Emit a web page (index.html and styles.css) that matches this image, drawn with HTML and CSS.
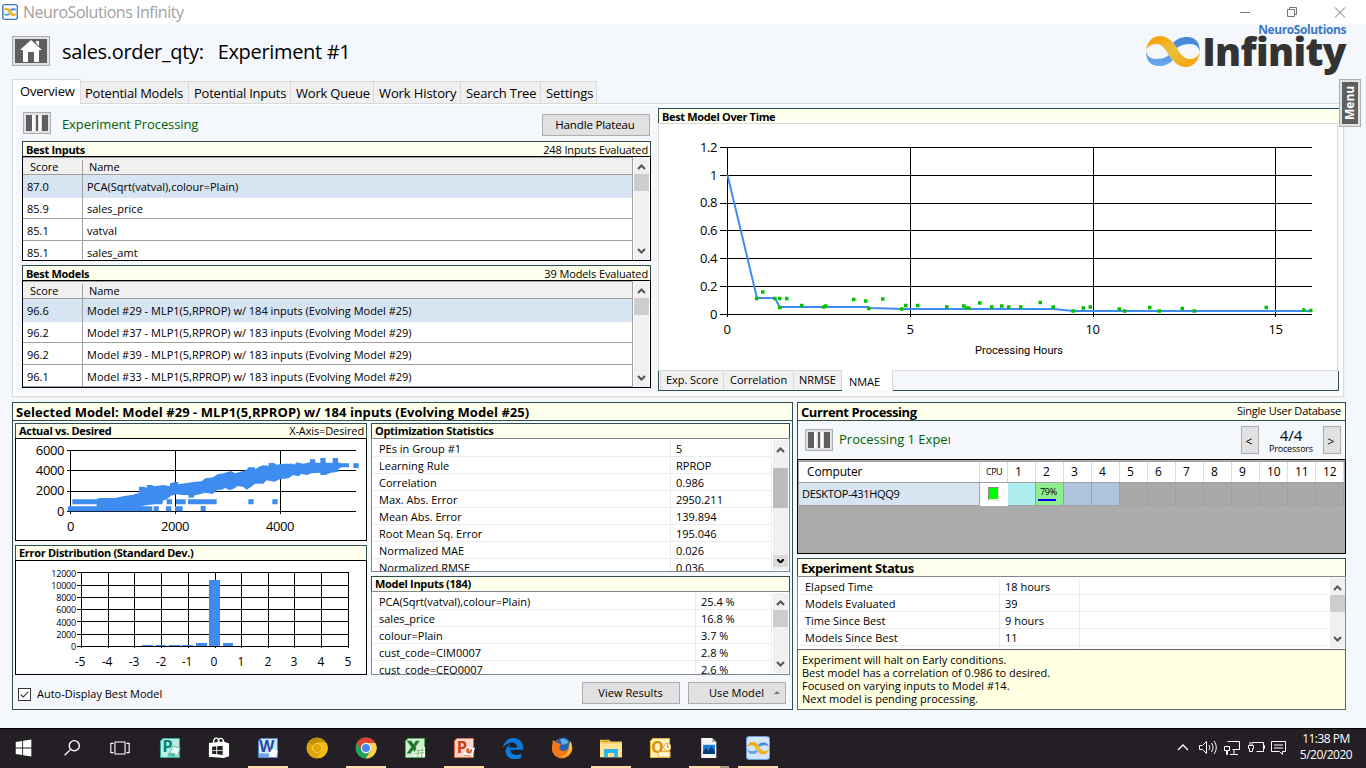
FILE: index.html
```
<!DOCTYPE html>
<html lang="en">
<head>
<meta charset="utf-8">
<title>NeuroSolutions Infinity</title>
<link rel="stylesheet" href="styles.css">
</head>
<body>
<svg class="defs" width="0" height="0">
  <defs>
    <linearGradient id="gold" x1="0" y1="0" x2="1" y2="1"><stop offset="0" stop-color="#ff9c00"/><stop offset=".5" stop-color="#e8c040"/><stop offset="1" stop-color="#ff9c00"/></linearGradient>
    <linearGradient id="sky" x1="0" y1="0" x2="0" y2="1"><stop offset="0" stop-color="#4285d6"/><stop offset="1" stop-color="#6ba6ee"/></linearGradient>
    <symbol id="up" viewBox="0 0 9 6"><path d="M1 5 4.500 1.500 8 5" fill="none" stroke="currentColor" stroke-width="2"/></symbol>
    <symbol id="down" viewBox="0 0 9 6"><path d="M1 1 4.500 4.500 8 1" fill="none" stroke="currentColor" stroke-width="2"/></symbol>
    <symbol id="infinity" viewBox="0 0 54 31">
      <path d="M0 15C1 20 4 23 10 23 15 23 19 22 23 19L27 24C23 28 19 30 13 30 5 30 0 25 0 15zM54 16C53 11 50 8 44 8 39 8 35 9 31 12L27 7C31 3 35 1 41 1 49 1 54 6 54 16z" fill="url(#sky)"/>
      <path d="M0 15C1 4 8 0 14 0 22 0 26 5 31 12 34 18 38 23 44 23 49 23 53 20 54 15 53 26 46 31 40 31 32 31 28 26 23 19 19 13 16 8 11 8 6 8 1 10 0 15z" fill="url(#gold)"/>
    </symbol>
    <symbol id="pause" viewBox="0 0 22 16"><path d="M0 0h6v16H0zM10 0h2v16h-2zM16 0h6v16h-6z" fill="#5f5f5f"/><path d="M6 0h2.500v16H6zM13 0h2v16h-2z" fill="#fff"/></symbol>
  </defs>
</svg>

<header class="titlebar">
  <svg class="app-icon" viewBox="0 0 16 16"><rect x=".7" y=".7" width="14.600" height="14.600" rx="2" fill="#f4f7fc" stroke="#3b78c4" stroke-width="1.300"/><use href="#infinity" x="1" y="4" width="14" height="8"/></svg>
  <span class="app-name">NeuroSolutions Infinity</span>
  <svg class="window-buttons" viewBox="0 0 110 20" fill="none" stroke="#777"><path d="M0 10.500h10"/><path d="M47.500 7.500h7v7h-7zM49.500 7.500v-2h7v7h-2"/><path d="M95 5.500l10 10M105 5.500l-10 10"/></svg>
</header>

<main class="app">
  <section class="heading">
    <div class="home"><svg viewBox="0 0 32 24"><rect width="32" height="24" fill="#5f5f5f"/><path d="M16 1 27 11h-3v12h-5v-10h-6v10H8V11H5zM21 2h3v5l-3-3z" fill="#fff"/></svg></div>
    <h1><span>sales.order_qty:</span><span>Experiment #1</span></h1>
    <div class="brand">
      <svg class="brand-mark" viewBox="0 0 54 31"><use href="#infinity"/></svg>
      <div class="brand-text"><span class="brand-small">NeuroSolutions</span><span class="brand-big">Infinity</span></div>
    </div>
  </section>

  <nav class="tabs">
    <span class="tab on">Overview</span><span class="tab t2">Potential Models</span><span class="tab t3">Potential Inputs</span><span class="tab t4">Work Queue</span><span class="tab t5">Work History</span><span class="tab t6">Search Tree</span><span class="tab t7">Settings</span>
  </nav>

  <section class="overview">
    <div class="left">
      <div class="status">
        <div class="pause"><svg viewBox="0 0 22 16"><use href="#pause"/></svg></div>
        <span class="green">Experiment Processing</span>
        <button class="btn plateau">Handle Plateau</button>
      </div>
      <div class="caption"><b>Best Inputs</b><span>248 Inputs Evaluated</span></div>
      <div class="grid inputs">
        <div class="rows">
          <div class="row head"><span>Score</span><span>Name</span></div>
          <div class="row sel"><span>87.0</span><span>PCA(Sqrt(vatval),colour=Plain)</span></div>
          <div class="row"><span>85.9</span><span>sales_price</span></div>
          <div class="row"><span>85.1</span><span>vatval</span></div>
          <div class="row"><span>85.1</span><span>sales_amt</span></div>
        </div>
        <div class="scroll"><svg><use href="#up"/></svg><i></i><svg><use href="#down"/></svg></div>
      </div>
      <div class="caption second"><b>Best Models</b><span>39 Models Evaluated</span></div>
      <div class="grid models">
        <div class="rows">
          <div class="row head"><span>Score</span><span>Name</span></div>
          <div class="row sel"><span>96.6</span><span>Model #29 - MLP1(5,RPROP) w/ 184 inputs (Evolving Model #25)</span></div>
          <div class="row"><span>96.2</span><span>Model #37 - MLP1(5,RPROP) w/ 183 inputs (Evolving Model #29)</span></div>
          <div class="row"><span>96.2</span><span>Model #39 - MLP1(5,RPROP) w/ 183 inputs (Evolving Model #29)</span></div>
          <div class="row"><span>96.1</span><span>Model #33 - MLP1(5,RPROP) w/ 183 inputs (Evolving Model #29)</span></div>
        </div>
        <div class="scroll"><svg><use href="#up"/></svg><i></i><svg><use href="#down"/></svg></div>
      </div>
    </div>

    <div class="right">
      <div class="chart-caption"><b>Best Model Over Time</b></div>
      <svg class="time-chart" viewBox="659 124 678 246">
        <path class="axis" d="M720 147.500h592M720 175.500h592M720 203.500h592M720 230.500h592M720 258.500h592M720 286.500h592M720 314.500h592M727.500 147v170M910.500 147v170M1093.500 147v170M1275.500 147v170"/>
        <path class="line" d="M727.500 175 757 298h18l4.500 9H867l3 1 34 1h150l19 2h239"/>
        <path class="dots" d="M755 298.500h3.500M761 292h3.500M773 298.500h3.500M778 298.500h3.500M785 298.500h3.500M778 307.500h3.500M800 305.500h3.500M822 307h3.500M824 306h3.500M852 299.500h3.500M864 301h3.500M867 308.500h3.500M881 299h3.500M900 309h3.500M904 305.500h3.500M916 305.500h3.500M945 307h3.500M962 306h3.500M965 308h3.500M967 308h3.500M978 303h3.500M990 307h3.500M1000 306h3.500M1007 307h3.500M1019 307h3.500M1038.500 302.500h3.500M1051.500 307h3.500M1071.500 311h3.500M1081.500 308h3.500M1088.500 307h3.500M1117.500 309h3.500M1123 311h3.500M1148 307.500h3.500M1157.500 311h3.500M1180.500 308.500h3.500M1192.500 311h3.500M1264.500 307.500h3.500M1302 310h3.500M1309 310.500h3.500"/>
        <g class="label end"><text x="717" y="152">1.2</text><text x="717" y="180">1</text><text x="717" y="207">0.8</text><text x="717" y="235">0.6</text><text x="717" y="263">0.4</text><text x="717" y="291">0.2</text><text x="717" y="319">0</text></g>
        <g class="label mid"><text x="727" y="334">0</text><text x="910" y="334">5</text><text x="1092.500" y="334">10</text><text x="1275.500" y="334">15</text></g>
        <text class="hours" x="1019" y="354" textLength="88">Processing Hours</text>
      </svg>
      <div class="metrics"><span class="m1">Exp. Score</span><span class="m2">Correlation</span><span class="m3">NRMSE</span><span class="m4">NMAE</span></div>
    </div>
  </section>

  <section class="lower">
    <div class="selected">
      <div class="panel-title wide">Selected Model: Model #29 - MLP1(5,RPROP) w/ 184 inputs (Evolving Model #25)</div>
      <div class="selected-body">
        <div class="plots">
          <div class="caption"><b>Actual vs. Desired</b><span>X-Axis=Desired</span></div>
          <svg class="scatter" viewBox="15 438 352 103">
            <path class="axis" d="M67 450.500h289M67 470.500h289M67 491.500h289M67 511.500h289M70.500 450v64M175.500 450v64M280.500 450v64"/>
            <g transform="translate(0 395) scale(.33333)" fill="#3f8cf0">
              <path d="M204 334h253v15H204zM461 334h15v15h-15zM217 313h270v15H217zM498 334h16v15h-16zM525 334h23v15h-23zM602 333h15v15h-15zM500 313h16v15h-16zM528 313h29v15h-29zM564 313h86v15h-86zM745 313h16v15h-16zM817 313h16v15h-16zM1060 205h16v14h-16z"/>
              <path d="M290 340V314L296 309H345L373 303 400 299 417 293V275H433L440 279V270H456L463 274 490 270 510 274V265L525 261H535V268L560 264 585 260 605 259 616 250 640 247 652 238 670 235 693 228 705 235 722 230 740 225 745 217H765V223L780 214 790 211 806 212V204H822L830 209 850 206 878 206 883 209 890 202 910 206 930 202V193H946V203H961V189H977V203H998V189H1014V202L1024 205H1047V217H1025L1015 222V230L990 234 977 240 961 240V233L935 235 920 240 905 237 895 244 880 240 865 250 840 253 822 260 800 256 790 266 765 266 756 274 740 284 730 276 713 273 705 279 690 286 675 279 665 284 650 286 638 297 615 293 600 298 584 301 580 308 566 308 565 300 545 300 530 298 513 302 502 312 488 317V324L470 326 430 332 400 340z"/>
            </g>
            <g class="label end"><text x="64" y="455">6000</text><text x="64" y="475">4000</text><text x="64" y="495">2000</text><text x="64" y="516">0</text></g>
            <g class="label mid"><text x="70.500" y="531">0</text><text x="175" y="531">2000</text><text x="280" y="531">4000</text></g>
          </svg>
          <div class="caption second"><b>Error Distribution (Standard Dev.)</b></div>
          <svg class="errors" viewBox="15 560 352 115">
            <path class="axis" d="M77 572.500h272M77 585.500h272M77 597.500h272M77 609.500h272M77 621.500h272M77 634.500h272M77 646.500h272M81.500 572v76M108.500 572v76M134.500 572v76M161.500 572v76M188.500 572v76M215.500 572v76M241.500 572v76M268.500 572v76M294.500 572v76M321.500 572v76M348.500 572v76"/>
            <path fill="#3f8cf0" d="M142 645h11v1h-11zM156 645h10v1h-10zM169 645h11v1h-11zM182 645h11v1h-11zM196 643h11v3h-11zM209 580h11v66h-11zM223 643h10v3h-10z"/>
            <g class="tiny end"><text x="76" y="577">12000</text><text x="76" y="589">10000</text><text x="76" y="601">8000</text><text x="76" y="613">6000</text><text x="76" y="626">4000</text><text x="76" y="638">2000</text><text x="76" y="650">0</text></g>
            <g class="hist mid"><text x="80" y="666">-5</text><text x="107" y="666">-4</text><text x="134" y="666">-3</text><text x="161" y="666">-2</text><text x="187" y="666">-1</text><text x="214" y="666">0</text><text x="241" y="666">1</text><text x="268" y="666">2</text><text x="294" y="666">3</text><text x="321" y="666">4</text><text x="348" y="666">5</text></g>
          </svg>
        </div>
        <div class="stats">
          <div class="caption"><b>Optimization Statistics</b></div>
          <div class="list opt">
            <dl><dt>PEs in Group #1</dt><dd>5</dd><dt>Learning Rule</dt><dd>RPROP</dd><dt>Correlation</dt><dd>0.986</dd><dt>Max. Abs. Error</dt><dd>2950.211</dd><dt>Mean Abs. Error</dt><dd>139.894</dd><dt>Root Mean Sq. Error</dt><dd>195.046</dd><dt>Normalized MAE</dt><dd>0.026</dd><dt>Normalized RMSE</dt><dd>0.036</dd></dl>
            <div class="scroll lowered"><svg><use href="#up"/></svg><i></i><svg class="pressed"><use href="#down"/></svg></div>
          </div>
          <div class="caption second"><b>Model Inputs (184)</b></div>
          <div class="list mi">
            <dl><dt>PCA(Sqrt(vatval),colour=Plain)</dt><dd>25.4 %</dd><dt>sales_price</dt><dd>16.8 %</dd><dt>colour=Plain</dt><dd>3.7 %</dd><dt>cust_code=CIM0007</dt><dd>2.8 %</dd><dt>cust_code=CEO0007</dt><dd>2.6 %</dd></dl>
            <div class="scroll"><svg><use href="#up"/></svg><i></i><svg><use href="#down"/></svg></div>
          </div>
        </div>
      </div>
      <div class="actions">
        <span class="check"><svg viewBox="0 0 13 13"><path d="M2 6.500 5 9.500 11 3" fill="none" stroke="#333" stroke-width="1.300"/></svg></span>
        <span class="auto">Auto-Display Best Model</span>
        <button class="btn view">View Results</button>
        <button class="btn use">Use Model<i></i></button>
      </div>
    </div>

    <div class="side">
      <div class="processing">
        <div class="panel-title"><span>Current Processing</span><small>Single User Database</small></div>
        <div class="proc-bar">
          <div class="pause"><svg viewBox="0 0 22 16"><use href="#pause"/></svg></div>
          <span class="green clip">Processing 1 Experiment</span>
          <button class="btn step">&lt;</button>
          <div class="count"><span>4/4</span><small>Processors</small></div>
          <button class="btn step">&gt;</button>
        </div>
        <div class="computers">
          <div class="comp head"><span>Computer</span><span class="cpu">CPU</span><span>1</span><span>2</span><span>3</span><span>4</span><span>5</span><span>6</span><span>7</span><span>8</span><span>9</span><span>10</span><span>11</span><span>12</span></div>
          <div class="comp data"><span>DESKTOP-431HQQ9</span><span class="lamp"><i></i></span><span class="aqua"></span><span class="busy">79%<i></i></span><span class="idle"></span><span class="idle"></span><span></span><span></span><span></span><span></span><span></span><span></span><span></span><span></span></div>
        </div>
      </div>
      <div class="exp">
        <div class="panel-title"><span>Experiment Status</span></div>
        <div class="list es">
          <dl><dt>Elapsed Time</dt><dd>18 hours</dd><dd></dd><dt>Models Evaluated</dt><dd>39</dd><dd></dd><dt>Time Since Best</dt><dd>9 hours</dd><dd></dd><dt>Models Since Best</dt><dd>11</dd><dd></dd><dt></dt><dd></dd><dd></dd></dl>
          <div class="scroll"><svg><use href="#up"/></svg><i></i><svg><use href="#down"/></svg></div>
        </div>
        <div class="message"><p>Experiment will halt on Early conditions.</p><p>Best model has a correlation of 0.986 to desired.</p><p>Focused on varying inputs to Model #14.</p><p>Next model is pending processing.</p></div>
      </div>
    </div>
  </section>
  <div class="menu"><span>Menu</span></div>
</main>

<footer class="taskbar">
  <span class="slot"><svg viewBox="0 0 24 24"><path d="M3 5.500 10 4.400v7.100H3zM11 4.200l9-1.400v8.700h-9zM3 12.500h7v7.100l-7-1.100zM11 12.500h9v8.700l-9-1.400z" fill="#fff"/></svg></span>
  <span class="slot"><svg viewBox="0 0 24 24" fill="none" stroke="#fff" stroke-width="1.500"><circle cx="14.500" cy="9.500" r="5.500"/><path d="M10.500 13.500 4 20"/></svg></span>
  <span class="slot"><svg viewBox="0 0 24 24" fill="none" stroke="#fff" stroke-width="1.200"><path d="M6.500 5.500h11v13h-11zM5 7H2v10h3M19 7h3v10h-3"/></svg></span>
  <span class="slot first"><svg viewBox="0 0 24 24"><path d="M4 1h19v22H1V4z" fill="#0c9b86"/><path d="M4.500 2H22v20H2V4.500z" fill="#bfeae3"/><text x="3.500" y="16.500" font-size="18" fill="#0b8573">P</text><path d="M15 10l8 2-3 9-9-2z" fill="#eafaf7" stroke="#53b9ab"/><path d="M11 17l7 1-1 4-8-1z" fill="#53c0b0"/></svg></span>
  <span class="slot"><svg viewBox="0 0 24 24"><path d="M1 6.500 17 5v18L1 21.500zM17 5l6 2v14l-6 2z" fill="#fff"/><path d="M6 7c0-8 6-7 6-1M11 6c0-7 6-5 6 0" fill="none" stroke="#fff" stroke-width="1.500"/><path d="M4.500 10.500l4.500-.4v4h-4.500zM10 10l6-.5v4.600h-6zM4.500 15H9v3.800l-4.500-.4zM10 15h6v4.500l-6-.6z" fill="#241f24"/></svg></span>
  <span class="slot open"><svg viewBox="0 0 24 24"><path d="M4 1h19v22H1V4z" fill="#2d6bbf"/><path d="M4.500 2H22v20H2V4.500z" fill="#d5e6f8"/><text x="2.500" y="16.500" font-size="17" fill="#1c4fa8">W</text><path d="M16 13l7 2-3 7-8-1z" fill="#fff"/><path d="M2 18h11v4H2z" fill="#6fa2e0"/></svg></span>
  <span class="slot"><svg viewBox="0 0 24 24"><circle cx="12" cy="12" r="11.500" fill="#dda60b"/><path d="M12 12 3 6a11 11 0 0 1 18.500 0z" fill="#c28e00"/><path d="M12 6h10a11 11 0 0 1-10 17l5-8z" fill="#f2bd16"/><circle cx="12" cy="12" r="5" fill="#dda60b" stroke="#f4d160"/></svg></span>
  <span class="slot open"><svg viewBox="0 0 24 24"><circle cx="12" cy="12" r="11.500" fill="#25a05a"/><path d="M12 6.500h10.200a11.500 11.500 0 0 1-10.500 17l5.500-9z" fill="#fdd14b"/><path d="M2.100 6.200 7.300 14.700 12 6.500h10.200a11.500 11.500 0 0 0-20.100-.3z" fill="#e24334"/><circle cx="12" cy="12" r="5" fill="#4687f4" stroke="#fff" stroke-width="1.200"/></svg></span>
  <span class="slot"><svg viewBox="0 0 24 24"><path d="M4 1h19v22H1V4z" fill="#3e9b42"/><path d="M4.500 2H22v20H2V4.500z" fill="#d3edd0"/><path d="M3 4h5l2.500 4L13 4h4l-4.500 7 5 7h-5l-2.500-4-3 4H3l5-7z" fill="#22772b"/><path d="M13 13l10-2v11l-13-1z" fill="#f2faf0"/><path d="M13 15l9-1M12 18l10-1M16 13l-1 9M20 12l-1 10" stroke="#77b675" fill="none"/></svg></span>
  <span class="slot open"><svg viewBox="0 0 24 24"><path d="M4 1h19v22H1V4z" fill="#d05127"/><path d="M4.500 2H22v20H2V4.500z" fill="#fbd6c9"/><text x="4" y="17" font-size="18" fill="#c64316">P</text><path d="M15 10l9 2-3 10-10-2z" fill="#fff"/><circle cx="17.500" cy="15" r="3.300" fill="#e5683d"/><path d="M17.500 15v-4l3 1z" fill="#fff"/><path d="M12 20l8 1" stroke="#e5683d"/></svg></span>
  <span class="slot"><svg viewBox="0 0 24 24"><path d="M1 12C2 5 7 1 12.500 1 19 1 23 6 23 12v2H9c0 6 8 7 12 4v5c-7 3-16 1-17-6-.5-5 2-8 5-9-1 1-1.500 2-1.500 3.500h9C16.500 4 6 4 1 12z" fill="#0a7bdc"/></svg></span>
  <span class="slot"><svg viewBox="0 0 24 24"><circle cx="12" cy="12.500" r="11" fill="#e26613"/><circle cx="13" cy="9" r="8.500" fill="#2463b3"/><path d="M10 3c3-3 9 0 9 4-3-1-4 3-7 1z" fill="#67afe2"/><path d="M2 3l3 3 6 1.500-2 3.500c0 5 8 6 10 1l1-5c-1-1 5 3 3 8-4 11-21 10-22-2z" fill="#f3781c"/><path d="M21.500 4c5 13-5 19-12 18 7-1 11-6 10-12z" fill="#fbc23c"/></svg></span>
  <span class="slot open"><svg viewBox="0 0 24 24"><path d="M0 3h10l1.500 2H24v17H0z" fill="#f0c65a"/><path d="M1.500 4h8v1.500h-8z" fill="#d99f1d"/><path d="M0 7h24v15H0z" fill="#ffe394"/><path d="M4.500 13h15v9h-4v-4.500h-7V22h-4z" fill="#22b2ee"/></svg></span>
  <span class="slot"><svg viewBox="0 0 24 24"><path d="M4 1h19v22H1V4z" fill="#e2a116"/><path d="M4.500 2H22v20H2V4.500z" fill="#fff0b8"/><text x="2.500" y="17" font-size="17" fill="#d68f08">O</text><circle cx="20" cy="11" r="4" fill="#fff" stroke="#eaa923"/><path d="M20 8v3h2" stroke="#a67500" fill="none"/><path d="M10 16h13v6H10z" fill="#fff8d8" stroke="#dfa327"/></svg></span>
  <span class="slot open multi"><svg viewBox="0 0 24 24"><path d="M3.500 1h12l4.500 4.500V23H3.500z" fill="#f4f4f4"/><path d="M15.500 1v4.500H20z" fill="#aaa"/><path d="M5.500 8.500h13v10h-13z" fill="#1681da"/><path d="M5.500 16l3-4 3 3 3-5 4 6v2.500h-13z" fill="#083c75"/></svg></span>
  <span class="slot open"><svg class="big" viewBox="0 0 24 24"><rect width="24" height="24" rx="3" fill="#6d9de0"/><rect x="1" y="1" width="22" height="22" rx="2.500" fill="#d5e5f8"/><use href="#infinity" x="1" y="6" width="22" height="12.500"/></svg></span>
  <div class="tray">
    <svg viewBox="0 0 110 20" fill="none" stroke="#fff"><path d="M2 13l5-5 5 5" stroke-width="1.300"/><path d="M23.500 8.500h3l4-4v12l-4-4h-3zM33 8c1 2 1 3 0 5M35.500 6c2 3 2 6 0 9M38 4c3 4 3 9 0 13"/><path d="M51.500 4.500h12v8h-7M58 13v4M54 17.500h8M48.500 9.500h5v4h-2v4h-1v-4h-2z"/><path d="M76.500 5.500h11v9h-7M87.500 8.500h1v3h-1M72.500 8.500h5v3h-1v3h-3v-3h-1zM74 5v3M76 5v3"/><path d="M95.500 4.500h14v10h-3v3l-3-3h-8zM98 8h9M98 11h9"/></svg>
    <div class="clock"><span>11:38 PM</span><span>5/20/2020</span></div>
  </div>
</footer>
</body>
</html>
```
FILE: styles.css
```
* { box-sizing: border-box; }
body { margin: 0; width: 1366px; height: 768px; overflow: hidden; display: flex; flex-direction: column; background: #f4f7fc; color: #000; font-family: "Open Sans", "Noto Sans", sans-serif; font-size: 11px; letter-spacing: 0; }
.defs { position: absolute; }
svg { display: block; }
button { font: inherit; color: inherit; letter-spacing: inherit; }
b { letter-spacing: -.3px; }

.titlebar { height: 24px; background: #fff; display: flex; align-items: center; flex: none; }
.app-icon { width: 16px; height: 16px; margin-left: 2px; }
.app-name { margin-left: 5px; font-size: 16px; letter-spacing: -.48px; color: #a0a0a0; flex: 1; line-height: 24px; }
.window-buttons { width: 110px; height: 20px; margin: 0 16px 0 0; }

.app { height: 704px; position: relative; padding-left: 12px; flex: none; }
.heading { height: 55px; display: flex; align-items: flex-start; }
.home { margin-top: 12px; width: 38px; height: 30px; padding: 2px; border: 1px solid #adadad; background: #e1e1e1; }
.home svg { width: 32px; height: 24px; }
h1 { margin: 13px 0 0 12px; font-size: 20px; font-weight: 400; line-height: 30px; flex: 1; letter-spacing: -.33px; display: flex; gap: 14px; }
.brand { display: flex; width: 200px; margin-right: 20px; }
.brand-mark { width: 54px; height: 31px; margin-top: 12px; flex: none; }
.brand-text { display: flex; flex-direction: column; align-items: flex-end; width: 146px; }
.brand-small { font-size: 12px; line-height: 12px; font-weight: 700; color: #3b78c4; letter-spacing: -.4px; }
.brand-big { font-size: 39px; line-height: 32px; font-weight: 800; color: #333; letter-spacing: -.65px; margin-top: -1px; }

.tabs { height: 24px; display: flex; align-items: flex-end; font-size: 13px; letter-spacing: -.22px; }
.tab { height: 22px; line-height: 23px; background: #f0f0f0; border: 1px solid #d9d9d9; border-left: 0; border-bottom: 0; padding-left: 5px; white-space: nowrap; }
.tab.on { width: 69px; height: 25px; background: #fff; border-left: 1px solid #d9d9d9; padding-left: 7px; line-height: 23px; margin-bottom: -1px; z-index: 1; }
.t2 { width: 108px; padding-left: 4px; } .t3 { width: 102px; } .t4 { width: 83px; } .t5 { width: 87px; letter-spacing: -.1px; } .t6 { width: 80px; letter-spacing: -.1px; } .t7 { width: 56px; letter-spacing: -.1px; }

.overview { width: 1332px; height: 294px; border: 1px solid #d9d9d9; box-shadow: 2px 1px 0 #f0f0f0; background: linear-gradient(#f4f7fc, #f4f7fc) no-repeat 3px 1px / 1323px 288px #fff; padding: 4px 4px 0 9px; display: flex; gap: 7px; }
.left { width: 629px; }
.status { height: 33px; display: flex; align-items: flex-start; }
.pause { width: 28px; height: 22px; border: 1px solid #adadad; background: #e1e1e1; padding: 2px; flex: none; margin: 4px 0 0 1px; }
.pause svg { width: 22px; height: 16px; }
.green { color: #006400; font-size: 13px; letter-spacing: -.1px; }
.status .green { margin-left: 11px; flex: 1; line-height: 33px; }
.btn { border: 1px solid #adadad; background: #e1e1e1; padding: 0; text-align: center; height: 22px; line-height: 20px; }
.plateau { width: 108px; margin: 6px 1px 0 0; font-size: 11.5px; letter-spacing: -.15px; padding-right: 2px; }
.caption { height: 15px; background: #ffffee; border: 1px solid #2f4f4f; border-bottom: 0; display: flex; justify-content: space-between; padding: 0 2px 0 3px; line-height: 15px; white-space: nowrap; letter-spacing: -.12px; }
.caption.second { margin-top: 4px; }
.selected .caption { line-height: 14px; }
.grid { border: 1px solid #000; display: flex; background: #fff; overflow: hidden; }
.inputs { height: 105px; } .models { height: 108px; }
.rows { width: 610px; border-right: 1px solid #a0a0a0; }
.row { height: 22px; display: grid; grid-template-columns: 60px 1fr; border-bottom: 1px solid #a0a0a0; line-height: 23px; }
.row span { padding-left: 4px; border-right: 1px solid #a0a0a0; }
.row span + span { border-right: 0; }
.row.sel span { background: #d7e4f2; }
.row.head { height: 18px; background: #f0f0f0; line-height: 20px; border-top: 1px solid #a0a0a0; }
.row.head span { padding-left: 7px; margin-top: 2px; line-height: 14px; letter-spacing: -.05px; }
.row.head span + span { padding-left: 6px; }
.scroll { width: 17px; background: #f0f0f0; border-left: 1px solid #fff; border-right: 1px solid #fff; display: flex; flex-direction: column; align-items: center; padding: 7px 0 6px; color: #555; flex: none; }
.scroll svg { width: 9px; height: 6px; flex: none; }
.scroll i { width: 15px; height: 17px; background: #cdcdcd; margin: 4px 0 auto; }

.right { width: 681px; display: flex; flex-direction: column; }
.chart-caption { height: 15px; background: #ffffee; border: 1px solid #2f4f4f; border-width: 1px 0 0 1px; padding-left: 3px; line-height: 15px; }
.chart-caption b { letter-spacing: -.35px; }
.time-chart { width: 680px; height: 248px; border: 1px solid #d9d9d9; background: #fff; }
.metrics { width: 681px; height: 20px; border: 1px solid #2f4f4f; border-top: 0; display: flex; line-height: 18px; padding-left: 1px; letter-spacing: -.05px; }
.metrics span { background: #f0f0f0; border-right: 1px solid #d9d9d9; padding-left: 6px; height: 19px; }
.metrics .m1 { width: 64px; border-left: 1px solid #d9d9d9; padding-left: 5px; } .metrics .m2 { width: 70px; } .metrics .m3 { width: 48px; padding-left: 5px; }
.metrics .m4 { width: 51px; height: 21px; margin-top: -1px; background: #fff; padding-left: 7px; line-height: 23px; }
.axis { stroke: #000; fill: none; }
.line { stroke: #3f8cf0; stroke-width: 2; fill: none; }
.dots { stroke: #00c000; stroke-width: 3.500; }
.label { font-size: 13px; letter-spacing: -.4px; }
.hist { font-size: 12px; letter-spacing: 0; }
.tiny { font-size: 9px; letter-spacing: -.2px; }
.end { text-anchor: end; }
.mid, .hours { text-anchor: middle; }
.hours { font: 11px Roboto, sans-serif; letter-spacing: 0; }

.lower { display: flex; gap: 4px; margin-top: 5px; }
.selected { width: 781px; height: 308px; border: 1px solid #2f4f4f; }
.panel-title { height: 18px; background: #ffffee; border-bottom: 1px solid #2f4f4f; font-weight: 700; font-size: 13px; line-height: 19px; padding: 0 4px 0 3px; display: flex; justify-content: space-between; letter-spacing: -.42px; white-space: nowrap; }
.panel-title.wide { letter-spacing: .06px; }
.panel-title small { font-size: 11px; font-weight: 400; letter-spacing: -.22px; line-height: 16px; }
.selected-body { display: flex; gap: 4px; padding: 2px 2px 0; }
.plots { width: 352px; } .stats { width: 419px; }
.scatter, .errors { width: 352px; background: #fff; outline: 1px solid #000; outline-offset: -1px; }
.scatter { height: 103px; } .errors { height: 115px; }
.list { border: 1px solid #828790; background: #fff; display: flex; padding: 1px; overflow: hidden; }
.opt { height: 134px; } .mi { height: 84px; }
.list dl { margin: 0; width: 399px; flex: none; display: grid; grid-template-columns: 298px 1fr; grid-auto-rows: 17px; line-height: 17px; }
.mi dl { grid-template-columns: 323px 1fr; }
.list dt, .list dd { margin: 0; border-right: 1px solid #ececec; border-bottom: 1px solid #ececec; padding-left: 6px; white-space: nowrap; }
.list dd { padding-left: 5px; }
.scroll.lowered i { margin-top: 15px; height: 40px; background: #bcbcbc; }
.pressed { color: #000; background: #dadada; outline: 4px solid #dadada; outline-offset: -1px; }
.actions { height: 34px; display: flex; padding: 7px 6px 0 5px; align-items: flex-start; }
.check { width: 13px; height: 13px; border: 1px solid #333; background: #fff; margin-top: 6px; }
.check svg { width: 11px; height: 11px; }
.auto { margin-left: 6px; flex: 1; line-height: 24px; }
.view, .use { width: 98px; letter-spacing: .05px; padding-right: 1px; }
.use { margin-left: 8px; position: relative; }
.use i { position: absolute; right: 5px; top: 8px; border: 3px solid transparent; border-top: 0; border-bottom-color: #777; }

.side { width: 549px; }
.processing { height: 152px; border: 1px solid #2f4f4f; border-bottom: 0; }
.proc-bar { height: 38px; display: flex; align-items: flex-start; padding: 5px 4px 0 6px; }
.proc-bar .pause { margin: 3px 0 0 1px; }
.clip { margin-left: 6px; width: 111px; overflow: hidden; white-space: nowrap; line-height: 27px; margin-right: 291px; letter-spacing: 0; }
.step { width: 18px; height: 28px; line-height: 29px; flex: none; font-size: 12px; padding-right: 2px; }
.count { width: 64px; display: flex; flex-direction: column; align-items: center; flex: none; font-size: 15px; line-height: 18px; letter-spacing: 0; }
.count small { font-size: 9px; line-height: 10px; letter-spacing: -.2px; }
.computers { height: 95px; margin: 0 -1px; border: 1px solid #000; background: #ababab; padding: 1px; }
.comp { display: grid; grid-template-columns: 181px repeat(13, 28px); width: 545px; height: 22px; }
.comp.head { background: #fff; font-size: 12px; line-height: 20px; border-bottom: 1px solid #a0a0a0; border-top: 1px solid #a0a0a0; letter-spacing: -.15px; }
.comp.head span { border-right: 1px solid #ddd; padding-left: 7px; }
.comp.head .cpu { font-size: 9px; letter-spacing: -.5px; padding-left: 6px; }
.comp.head span:first-child { padding-left: 8px; }
.comp.data span { border-right: 1px solid #a0a0a0; border-bottom: 1px solid #a0a0a0; background: #a9a9a9; line-height: 22px; letter-spacing: -.3px; }
.comp.data span:first-child { background: #d7e4f2; padding-left: 3px; }
.comp.data .lamp { background: #fff; border-color: #fff; }
.lamp i { display: block; width: 11px; height: 14px; margin: 4px 8px; background: #0f0; border: 1px solid #888; border-bottom: 2px solid #eee; border-right-color: #ddd; }
.comp.data .aqua { background: #afeeee; } .comp.data .idle { background: #b0c4de; }
.comp.data .busy { background: #90ee90; font-size: 9px; line-height: 17px; padding-left: 4px; }
.busy i { display: block; width: 18px; height: 2px; background: #00f; margin-left: -2px; margin-top: -1px; }
.exp { margin-top: 4px; height: 152px; }
.exp .panel-title { border: 1px solid #2f4f4f; border-bottom: 0; }
.es { height: 73px; border-bottom: 0; }
.es dl { width: 530px; grid-template-columns: 201px 80px 1fr; }
.es dd:nth-child(3n) { border-right: 0; }
.message { height: 61px; background: #ffffe1; border: 1px solid #646464; padding: 3px 4px; }
.message p { margin: 0; line-height: 13px; }

.menu { position: absolute; left: 1339px; top: 55px; width: 22px; height: 48px; border: 1px solid #adadad; background: #e1e1e1; padding: 2px; }
.menu span { display: block; width: 16px; height: 42px; background: #5f5f5f; color: #fff; font-weight: 700; font-size: 12px; writing-mode: vertical-rl; transform: rotate(180deg); text-align: center; line-height: 15px; }

.taskbar { height: 40px; flex: none; background: #241f24; border-top: 1px solid #000; display: flex; }
.slot { width: 49px; height: 39px; display: flex; align-items: center; justify-content: center; flex: none; font-weight: 700; padding-bottom: 2px; }
.slot:nth-child(-n+3) { width: 48px; }
.slot.first { margin-left: 1px; }
.slot svg { width: 22px; height: 22px; }
.slot svg.big { width: 24px; height: 24px; }
.slot.open { background: linear-gradient(#ffdca8, #ffdca8) no-repeat 5px 37px / 40px 2px; }
.slot.multi { background: linear-gradient(90deg, #ffdca8 31px, #b09b80 31px) no-repeat 5px 37px / 40px 2px; }
.tray { margin-left: auto; color: #fff; display: flex; padding-right: 10px; }
.tray > svg { width: 110px; height: 20px; margin: 8px 10px 0 0; }
.clock { width: 60px; font-size: 12px; letter-spacing: -.5px; line-height: 16px; padding-top: 2px; display: flex; flex-direction: column; align-items: center; }
```
